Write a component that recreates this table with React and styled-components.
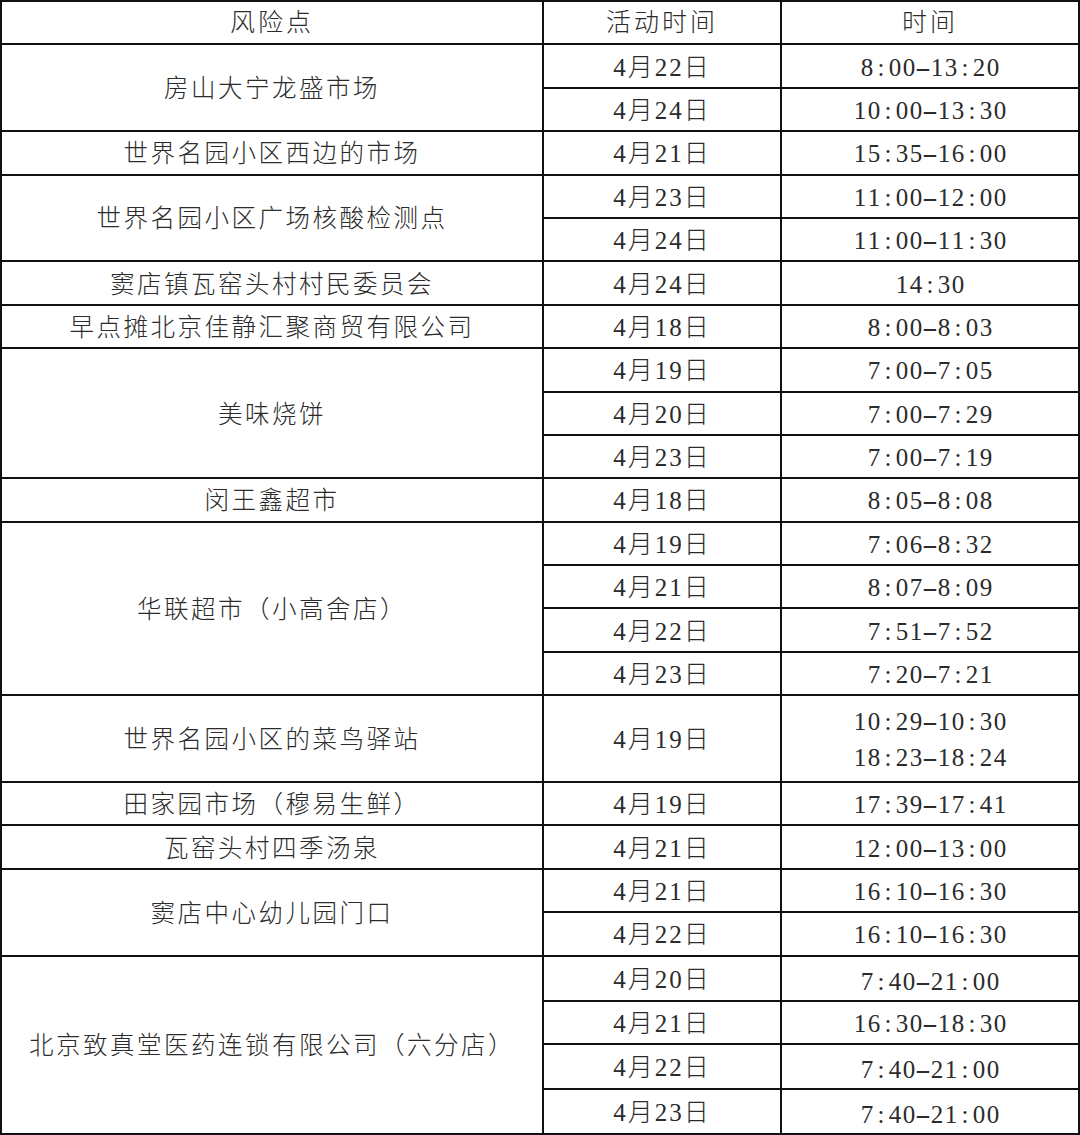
import React from "react";
import styled, { createGlobalStyle } from "styled-components";

const Global = createGlobalStyle`
  html, body { margin: 0; padding: 0; background: #fff; }
  #root { width: 1080px; height: 1135px; }
`;

const Grid = styled.div`
  box-sizing: border-box;
  width: 1080px;
  height: 1135px;
  display: grid;
  grid-template-columns: 540px 236px 296px;
  grid-template-rows: repeat(26, 1fr);
  gap: 2px;
  padding: 2px;
  background: #111;
  font-family: "Liberation Serif", "Noto Sans CJK SC", serif;
  font-size: 25px;
  font-weight: 300;
  color: #2b2b2b;
`;

const Cell = styled.div`
  background: #fff;
  grid-row: span ${(p) => p.$span || 1};
  display: flex;
  flex-direction: column;
  align-items: center;
  justify-content: center;
  padding-top: ${(p) => (p.$low ? 7 : 3)}px;
  letter-spacing: 2px;
  line-height: 36px;
  white-space: nowrap;
`;

const Place = styled(Cell)`
  letter-spacing: 2.5px;
  font-size: 24.5px;
`;

const Head = styled(Cell)`
  font-size: 25px;
  letter-spacing: 3px;
  padding-top: 1px;
`;

const TimeLine = styled.span`
  display: inline-flex;
`;

const Ch = styled.span`
  display: inline-block;
  width: 14px;
  text-align: center;
  letter-spacing: 0;
  transform: ${(p) => (p.$dash ? "scaleX(1.9)" : "none")};
`;

const Time = ({ v }) => (
  <TimeLine>
    {v.split("").map((c, i) => (
      <Ch key={i} $dash={c === "-"}>
        {c}
      </Ch>
    ))}
  </TimeLine>
);

const data = [
  { place: "房山大宁龙盛市场", rows: [["4月22日", "8:00-13:20"], ["4月24日", "10:00-13:30"]] },
  { place: "世界名园小区西边的市场", rows: [["4月21日", "15:35-16:00"]] },
  { place: "世界名园小区广场核酸检测点", rows: [["4月23日", "11:00-12:00"], ["4月24日", "11:00-11:30"]] },
  { place: "窦店镇瓦窑头村村民委员会", rows: [["4月24日", "14:30"]] },
  { place: "早点摊北京佳静汇聚商贸有限公司", rows: [["4月18日", "8:00-8:03"]] },
  { place: "美味烧饼", rows: [["4月19日", "7:00-7:05"], ["4月20日", "7:00-7:29"], ["4月23日", "7:00-7:19"]] },
  { place: "闵王鑫超市", rows: [["4月18日", "8:05-8:08"]] },
  {
    place: "华联超市（小高舍店）",
    rows: [["4月19日", "7:06-8:32"], ["4月21日", "8:07-8:09"], ["4月22日", "7:51-7:52"], ["4月23日", "7:20-7:21"]],
  },
  { place: "世界名园小区的菜鸟驿站", tall: true, rows: [["4月19日", "10:29-10:30|18:23-18:24"]] },
  { place: "田家园市场（穆易生鲜）", rows: [["4月19日", "17:39-17:41"]] },
  { place: "瓦窑头村四季汤泉", rows: [["4月21日", "12:00-13:00"]] },
  { place: "窦店中心幼儿园门口", rows: [["4月21日", "16:10-16:30"], ["4月22日", "16:10-16:30"]] },
  {
    place: "北京致真堂医药连锁有限公司（六分店）",
    last: true,
    rows: [["4月20日", "7:40-21:00"], ["4月21日", "16:30-18:30"], ["4月22日", "7:40-21:00"], ["4月23日", "7:40-21:00"]],
  },
];

export default function App() {
  return (
    <>
      <Global />
      <Grid>
        <Head>风险点</Head>
        <Head>活动时间</Head>
        <Head>时间</Head>
        {data.map((g, gi) => {
          const unit = g.tall ? 2 : 1;
          return (
            <React.Fragment key={gi}>
              <Place $span={g.rows.length * unit}>{g.place}</Place>
              {g.rows.map(([d, t], ri) => (
                <React.Fragment key={ri}>
                  <Cell $span={unit}>{d}</Cell>
                  <Cell $span={unit} $low={g.last && ri !== 1}>
                    {t.split("|").map((line, li) => (
                      <Time key={li} v={line} />
                    ))}
                  </Cell>
                </React.Fragment>
              ))}
            </React.Fragment>
          );
        })}
      </Grid>
    </>
  );
}
